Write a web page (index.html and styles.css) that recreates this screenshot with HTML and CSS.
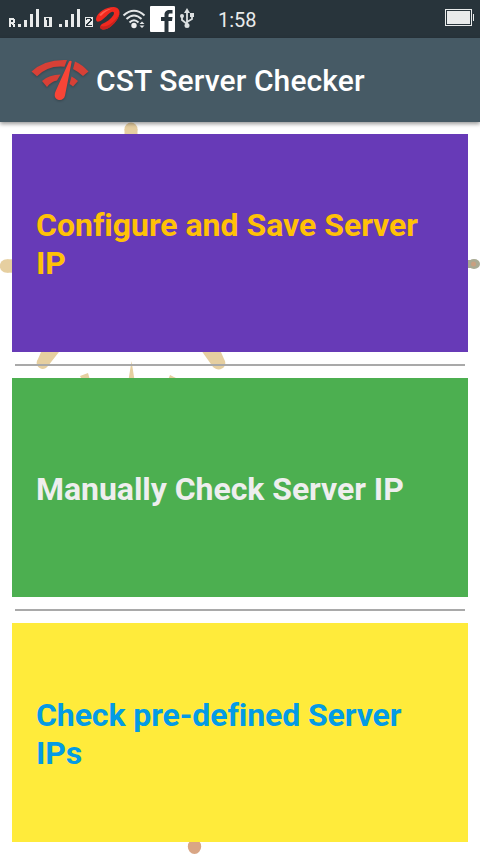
FILE: index.html
```
<!DOCTYPE html>
<html lang="en">
<head>
<meta charset="utf-8">
<title>CST Server Checker</title>
<link rel="stylesheet" href="styles.css">
</head>
<body>
<div class="status">
  <svg class="status-icons" width="204" height="38" viewBox="0 0 204 38">
    <g fill="#e9ebeb" shape-rendering="crispEdges">
      <path d="M9 18h5v1h1v4h-1v1h1v3h-2v-2h-1v-1h-1v3H9zM11 20v2h2v-2z" fill-rule="evenodd"/>
      <path d="M18 24h3v3h-3zM24 20h3v7h-3zM30 14h3v13h-3zM36 9h3v18h-3zM59 24h3v3h-3zM65 20h3v7h-3zM71 14h3v13h-3zM77 9h3v18h-3z"/>
      <path fill-rule="evenodd" d="M44 17h8v10h-8zM46 18v2h1v6h2v-8z"/>
      <path fill-rule="evenodd" d="M85 17h8v10h-8zM86 18v2h1v-1h3v2h-1v1h-1v1h-1v1h-1v2h6v-1h-4v-1h1v-1h1v-1h1v-1h1v-2h-1v-1z"/>
    </g>
    <path d="M96 19C97 12 107 6.500 114 7C120 7.500 121 13 117.500 19C114 25 107 30 103 29.500C99.500 29 99.500 25.500 102 24C107 22 111 19 113.500 15C115 12 113 11 110.500 12.500C107 15 103 20.500 99 21.500C97 22 96 21 96 19Z" fill="#f0291f"/>
    <path d="M119.500 14C116 24 108 30 103 29.500C100 29 99.500 27 100.500 26C107 28 114 23 119.500 14Z" fill="#c9221d"/>
    <path d="M99 15Q105 8.500 113 8.500Q106 10 101 16Z" fill="#ff5c4c"/>
    <g fill="none" stroke="#e3e6e7" stroke-width="2">
      <path d="M123.500 15.500Q134 6 144.500 15.500M126.500 19Q134 12 141.500 19M129.500 22.500Q134 18 138.500 22.500"/>
    </g>
    <circle cx="134" cy="25.500" r="2.700" fill="#eee"/>
    <path d="M139.500 24l2.500-2.500 2.500 2.500zM139.500 25.500h5l-2.500 2.500z" fill="#e3e6e7"/>
    <rect x="150" y="6" width="25" height="26" rx="1" fill="#fff"/>
    <path d="M164.500 32V21H161v-4h3.500v-2c0-3.500 2-5 5-5h3v3.500h-2c-1.500 0-2 .5-2 2V17h4l-.5 4h-3.500v11z" fill="#28343b"/>
    <g fill="none" stroke="#dce0e1" stroke-width="1.800">
      <path d="M187 12v14M182 16v4l5 4M192 15v4l-5 3"/>
    </g>
    <path d="M184 13l3-5 3 5zM190 13h4v4h-4z" fill="#dce0e1"/>
    <circle cx="182" cy="16" r="2" fill="#dce0e1"/>
    <circle cx="187" cy="25.500" r="2.500" fill="#dce0e1"/>
  </svg>
  <span class="clock">1:58</span>
  <svg class="battery" width="30" height="18" viewBox="0 0 30 18" shape-rendering="crispEdges">
    <path d="M.5.5h26v16H.5z" fill="none" stroke="#e9ebeb"/>
    <path d="M2 2h23v13H2zM28 5h1v7h-1z" fill="#e9ebeb"/>
  </svg>
</div>
<header class="appbar">
  <svg class="logo" width="64" height="64" viewBox="0 0 64 64">
    <g fill="#d84036">
      <path d="M3.500 22.500Q17 10 39 11L36.500 17.700Q20 16 9 27.300Z"/>
      <path d="M47 12.500Q54 15.500 60.500 22.500L55 27Q50 22.500 45 20Z"/>
      <path d="M14 32Q21 25.500 32.500 25.500L29 31.500Q23 32.500 19 38Z"/>
      <path d="M43.500 27.500Q47 29 50 32L45 37.500Q43 35.500 41.500 35Z"/>
      <path class="needle" d="M41 12.500Q42.500 11 43.700 12.500L37 46.500C36 53 26.500 52 26.700 46Q26.700 44 27.700 42Z"/>
    </g>
  </svg>
  <h1 class="title">CST Server Checker</h1>
</header>
<main class="content">
  <svg class="backdrop" width="480" height="732" viewBox="0 122 480 732">
    <g fill="#e6cfa0">
      <ellipse cx="131" cy="129" rx="6.500" ry="6.500"/>
      <path d="M124.500 129h13v8h-13z"/>
      <circle cx="6.500" cy="266" r="6.700"/>
      <path d="M7 259.300h6v13.400H7z"/>
      <path d="M45 343H66L48 366C43 373 33 366 38 359ZM196 343H217L224 359C229 367 219 373 213 367Z"/>
      <path d="M131.500 361L134.500 380H128.500ZM80 376l8-3 2 7h-8zM168 380l2-5 6 3-1 2z"/>
    </g>
    <ellipse cx="474" cy="264" rx="6" ry="5" fill="#a9aa93"/>
    <path d="M466 260h6v8h-6z" fill="#a9aa93"/>
    <circle cx="473.500" cy="264" r="2.500" fill="#c9a080"/>
    <ellipse cx="194.500" cy="846.500" rx="6.700" ry="7.500" fill="#d9a685"/>
  </svg>
  <div class="card configure">Configure and Save Server IP</div>
  <div class="divider"></div>
  <div class="card manual">Manually Check Server IP</div>
  <div class="divider"></div>
  <div class="card predefined">Check pre-defined Server IPs</div>
</main>
</body>
</html>
```
FILE: styles.css
```
* { box-sizing: border-box; }
body {
  margin: 0;
  width: 480px;
  height: 854px;
  display: flex;
  flex-direction: column;
  overflow: hidden;
  background: #fff;
  font-family: Roboto, "Liberation Sans", sans-serif;
}
.status {
  height: 38px;
  flex: none;
  display: flex;
  background: #28343b;
  color: #e9ebeb;
}
.clock {
  margin-left: 14px;
  font-size: 20px;
  line-height: 40px;
}
.battery { margin: 9px 5px 0 auto; }
.appbar {
  position: relative;
  z-index: 1;
  height: 84px;
  flex: none;
  display: flex;
  align-items: center;
  padding: 2px 0 0 28px;
  background: #465a65;
  box-shadow: 0 2px 4px rgba(0, 0, 0, .4);
}
.logo {
  flex: none;
  filter: drop-shadow(0 1px 1px rgba(0, 0, 0, .25));
}
.needle { fill: #f84537; }
.title {
  margin: 0 0 0 4px;
  color: #fff;
  font-size: 30px;
  font-weight: 500;
  line-height: 36px;
  letter-spacing: .11px;
  white-space: nowrap;
}
.content {
  position: relative;
  flex: 1;
  min-height: 0;
  display: flex;
  flex-direction: column;
  gap: 12px;
  padding: 12px;
}
.backdrop {
  position: absolute;
  top: 0;
  left: 0;
}
.card {
  position: relative;
  flex: none;
  height: 219px;
  display: flex;
  align-items: center;
  padding: 2px 24px 0;
  font-size: 32px;
  font-weight: 700;
  line-height: 38px;
}
.configure { height: 218px; background: #673ab7; color: #ffc107; letter-spacing: -.02px; }
.manual { background: #4caf50; color: #eee; letter-spacing: -.05px; }
.predefined { background: #ffeb3b; color: #039be5; letter-spacing: -.09px; }
.divider {
  position: relative;
  flex: none;
  height: 2px;
  margin: 0 3px;
  background: #a9a9a9;
}
```
